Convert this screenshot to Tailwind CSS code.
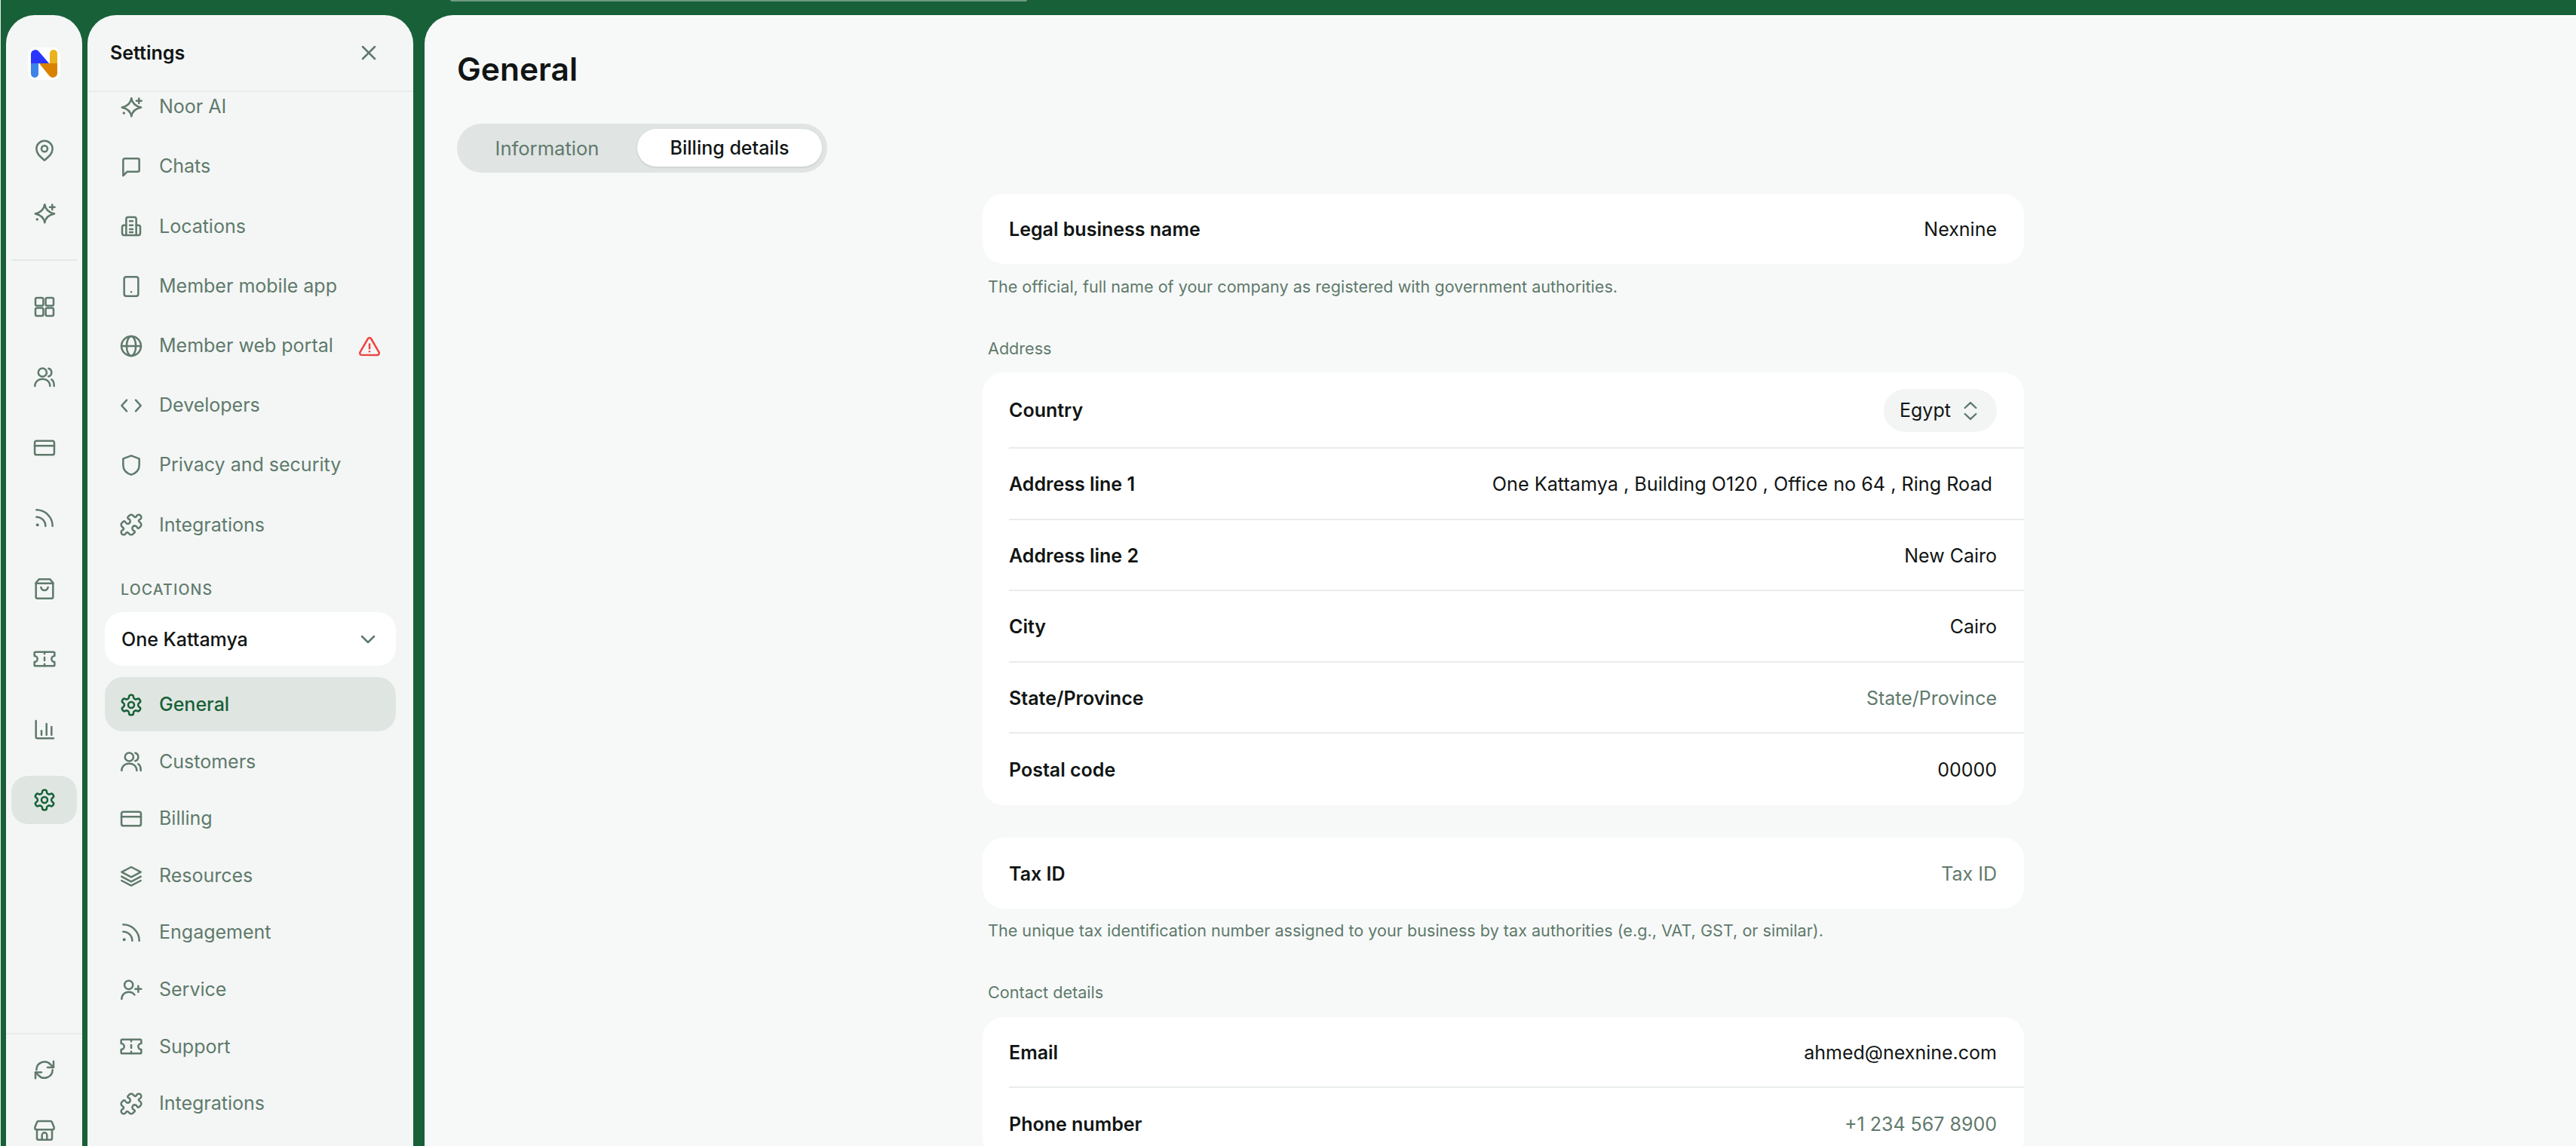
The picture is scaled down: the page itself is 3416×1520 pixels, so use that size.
<!DOCTYPE html>
<html lang="en">
<head>
  <meta charset="UTF-8" />
  <title>Settings - General</title>
  <script src="https://cdn.jsdelivr.net/npm/@tailwindcss/browser@4"></script>
</head>
<body class="h-screen overflow-hidden bg-[#176038] font-[Inter,sans-serif] text-[#111514]">

  <!-- icon set -->
  <svg class="hidden">
    <defs>
      <g id="spark"><path d="M12.2 3.2c.8 5 3.6 8 9.6 9.1-6 1.1-8.8 4-9.6 8.9-.8-4.9-3.6-7.8-9.4-8.9 5.8-1.1 8.6-4.1 9.4-9.1z"/><path d="M19.7 3.3v5M17.2 5.8h5"/><path d="M4.7 18h.01" stroke-width="2.6"/></g>
      <g id="pin"><path d="M12 21.5c-4-3.5-8-6.5-8-11.5a8 8 0 0 1 16 0c0 5-4 8-8 11.5z"/><circle cx="12" cy="10" r="3"/></g>
      <g id="grid"><rect x="3" y="3" width="7.8" height="7.8" rx="1.5"/><rect x="13.2" y="3" width="7.8" height="7.8" rx="1.5"/><rect x="3" y="13.2" width="7.8" height="7.8" rx="1.5"/><rect x="13.2" y="13.2" width="7.8" height="7.8" rx="1.5"/></g>
      <g id="users"><circle cx="10" cy="7.5" r="4.2"/><path d="M2.5 21c0-4 3-7 7.5-7s7.5 3 7.5 7"/><path d="M16 3.5c2 .5 3 2.2 3 4s-1 3.5-3 4"/><path d="M19 14.5c1.6.8 2.5 3 2.5 6.5"/></g>
      <g id="card"><rect x="2.3" y="5" width="19.4" height="14" rx="2"/><path d="M2.3 10h19.4"/></g>
      <g id="rss"><path d="M4 11a9 9 0 0 1 9 9M4 4a16 16 0 0 1 16 16"/><path d="M5 19h.01" stroke-width="3"/></g>
      <g id="bag"><path d="M6.5 2.5h11l3 3.5v14a1.5 1.5 0 0 1-1.5 1.5H5a1.5 1.5 0 0 1-1.5-1.5V6z"/><path d="M3.5 6.5h17"/><path d="M8.5 10.5c.5 2 2 3 3.5 3s3-1 3.5-3"/></g>
      <g id="ticket"><path d="M3 5h18a1 1 0 0 1 1 1v3a3 3 0 0 0 0 6v3a1 1 0 0 1-1 1H3a1 1 0 0 1-1-1v-3a3 3 0 0 0 0-6V6a1 1 0 0 1 1-1z"/><path d="M12 5v2M12 10.5v3M12 17v2"/></g>
      <g id="chart"><path d="M3.5 3v16a1.5 1.5 0 0 0 1.5 1.5h16"/><path d="M9 17v-4M14 17V6M19 17V9"/></g>
      <g id="gear"><path d="M12.22 2h-.44a2 2 0 0 0-2 2v.18a2 2 0 0 1-1 1.73l-.43.25a2 2 0 0 1-2 0l-.15-.08a2 2 0 0 0-2.73.73l-.22.38a2 2 0 0 0 .73 2.73l.15.1a2 2 0 0 1 1 1.72v.51a2 2 0 0 1-1 1.74l-.15.09a2 2 0 0 0-.73 2.73l.22.38a2 2 0 0 0 2.73.73l.15-.08a2 2 0 0 1 2 0l.43.25a2 2 0 0 1 1 1.73V20a2 2 0 0 0 2 2h.44a2 2 0 0 0 2-2v-.18a2 2 0 0 1 1-1.73l.43-.25a2 2 0 0 1 2 0l.15.08a2 2 0 0 0 2.73-.73l.22-.39a2 2 0 0 0-.73-2.73l-.15-.08a2 2 0 0 1-1-1.74v-.5a2 2 0 0 1 1-1.74l.15-.09a2 2 0 0 0 .73-2.73l-.22-.38a2 2 0 0 0-2.73-.73l-.15.08a2 2 0 0 1-2 0l-.43-.25a2 2 0 0 1-1-1.73V4a2 2 0 0 0-2-2z"/><circle cx="12" cy="12" r="3"/></g>
      <g id="refresh"><path d="M4 12a8 8 0 0 1 14-5.3L21 9.5"/><path d="M21 3.5v6h-6"/><path d="M20 12a8 8 0 0 1-14 5.3L3 14.5"/><path d="M3 20.5v-6h6"/></g>
      <g id="store"><path d="M6 3h12a1.5 1.5 0 0 1 1.4.9L21.5 9v1a1.5 1.5 0 0 1-1.5 1.5H4A1.5 1.5 0 0 1 2.5 10V9l2.1-5.1A1.5 1.5 0 0 1 6 3z"/><path d="M4.5 11.5V20a1.5 1.5 0 0 0 1.5 1.5h12a1.5 1.5 0 0 0 1.5-1.5v-8.5"/><path d="M9.5 21.5V17a2.5 2.5 0 0 1 5 0v4.5"/></g>
      <g id="chat"><path d="M4 5.5A1.5 1.5 0 0 1 5.5 4h13A1.5 1.5 0 0 1 20 5.5v10a1.5 1.5 0 0 1-1.5 1.5H8l-4 4z"/></g>
      <g id="building"><path d="M7 21V5a2 2 0 0 1 2-2h6a2 2 0 0 1 2 2v16"/><path d="M7 11H5a2 2 0 0 0-2 2v6a2 2 0 0 0 2 2h14a2 2 0 0 0 2-2v-6a2 2 0 0 0-2-2h-2"/><path d="M10.5 7h3M10.5 11h3M10.5 15h3M10.5 18h3"/></g>
      <g id="mobile"><rect x="5" y="2.5" width="14" height="19" rx="2"/><path d="M12 17.5h.01"/></g>
      <g id="globe"><circle cx="12" cy="12" r="9.7"/><path d="M2.3 12h19.4"/><ellipse cx="12" cy="12" rx="4.6" ry="9.7"/></g>
      <g id="code"><path d="M7.5 6.5 2.5 12l5 5.5"/><path d="M16.5 6.5l5 5.5-5 5.5"/></g>
      <g id="shield"><path d="M12 2.5l8 3v6.5c0 5-3.4 8-8 9.5-4.6-1.5-8-4.5-8-9.5V5.5z"/></g>
      <g id="puzzle"><path d="M19.439 7.85c-.049.322.059.648.289.878l1.568 1.568c.47.47.706 1.087.706 1.704s-.235 1.233-.706 1.704l-1.611 1.611a.98.98 0 0 1-.837.276c-.47-.07-.802-.48-.968-.925a2.501 2.501 0 1 0-3.214 3.214c.446.166.855.497.925.968a.979.979 0 0 1-.276.837l-1.61 1.61a2.404 2.404 0 0 1-1.705.707 2.402 2.402 0 0 1-1.704-.706l-1.568-1.568a1.026 1.026 0 0 0-.877-.29c-.493.074-.84.504-1.02.968a2.5 2.5 0 1 1-3.237-3.237c.464-.18.894-.527.967-1.02a1.026 1.026 0 0 0-.289-.877l-1.568-1.568A2.402 2.402 0 0 1 1.998 12c0-.617.236-1.234.706-1.704L4.23 8.77c.24-.24.581-.353.917-.303.515.077.877.528 1.073 1.01a2.5 2.5 0 1 0 3.259-3.259c-.482-.196-.933-.558-1.01-1.073-.05-.336.062-.676.303-.917l1.525-1.525A2.402 2.402 0 0 1 12 1.998c.617 0 1.234.236 1.704.706l1.568 1.568c.23.23.556.338.877.29.493-.074.84-.504 1.02-.968a2.5 2.5 0 1 1 3.237 3.237c-.464.18-.894.527-.967 1.02Z"/></g>
      <g id="layers"><path d="M12 3l9.5 5-9.5 5-9.5-5z"/><path d="M2.5 12.5l9.5 5 9.5-5"/><path d="M2.5 16.5l9.5 5 9.5-5"/></g>
      <g id="userplus"><circle cx="9.5" cy="7" r="4.2"/><path d="M2.5 21c0-4 3-7 7-7 2.6 0 4.6 1 5.8 2.8"/><path d="M19 8v6M16 11h6"/></g>
      <g id="warn"><path d="M10.3 4.2 2 18.5a2 2 0 0 0 1.7 3h16.6a2 2 0 0 0 1.7-3L13.7 4.2a2 2 0 0 0-3.4 0z"/><path d="M12 10v4.5"/><path d="M12 17.8h.01"/></g>
      <g id="close"><path d="M6 6l12 12M18 6 6 18"/></g>
      <g id="down"><path d="M6 9l6 6 6-6"/></g>
      <g id="updown"><path d="M6.5 9 12 3.8 17.5 9"/><path d="M6.5 15l5.5 5.2 5.5-5.2"/></g>
    </defs>
  </svg>

  <!-- strip along the top of the window -->
  <div class="absolute left-[597px] top-0 h-[2px] w-[765px] rounded-b-sm bg-[#6f9a82]"></div>

  <div class="flex h-full">
    <div class="w-px shrink-0 bg-[#e6ebe8]"></div>

    <!-- icon rail -->
    <aside class="ml-[7px] mt-[20px] flex w-[101px] shrink-0 flex-col rounded-t-[38px] bg-[#f4f6f5] text-[#5f7a6c]">
      <div class="mt-[43px] flex justify-center">
        <div class="h-[43px] w-[43px] rounded-[10px] bg-white">
          <svg viewBox="0 0 43 43" class="h-full w-full">
            <path fill="#2936ff" d="M4 21V9a6 6 0 0 1 10.5-3.8L28 21z"/>
            <path fill="#3d84e8" d="M4 21h10v14a5 5 0 0 1-10 0z"/>
            <path fill="#eab21e" d="M29 8a5 5 0 0 1 10 0v13H29z"/>
            <path fill="#d98200" d="M15 21h24v13a6 6 0 0 1-10.5 3.8z"/>
          </svg>
        </div>
      </div>
      <div class="mt-[52px] flex h-[83px] items-center justify-center"><svg viewBox="0 0 24 24" class="h-8 w-8" fill="none" stroke="currentColor" stroke-width="1.9" stroke-linecap="round" stroke-linejoin="round"><use href="#pin"/></svg></div>
      <div class="flex h-[83px] items-center justify-center"><svg viewBox="0 0 24 24" class="h-8 w-8" fill="none" stroke="currentColor" stroke-width="1.9" stroke-linecap="round" stroke-linejoin="round"><use href="#spark"/></svg></div>
      <div class="mx-[7px] mt-[20px] h-[2px] bg-[#e3e9e6]"></div>
      <div class="mt-[14px] flex h-[93.5px] items-center justify-center"><svg viewBox="0 0 24 24" class="h-8 w-8" fill="none" stroke="currentColor" stroke-width="1.9" stroke-linecap="round" stroke-linejoin="round"><use href="#grid"/></svg></div>
      <div class="flex h-[93.5px] items-center justify-center"><svg viewBox="0 0 24 24" class="h-8 w-8" fill="none" stroke="currentColor" stroke-width="1.9" stroke-linecap="round" stroke-linejoin="round"><use href="#users"/></svg></div>
      <div class="flex h-[93.5px] items-center justify-center"><svg viewBox="0 0 24 24" class="h-8 w-8" fill="none" stroke="currentColor" stroke-width="1.9" stroke-linecap="round" stroke-linejoin="round"><use href="#card"/></svg></div>
      <div class="flex h-[93.5px] items-center justify-center"><svg viewBox="0 0 24 24" class="h-8 w-8" fill="none" stroke="currentColor" stroke-width="1.9" stroke-linecap="round" stroke-linejoin="round"><use href="#rss"/></svg></div>
      <div class="flex h-[93.5px] items-center justify-center"><svg viewBox="0 0 24 24" class="h-8 w-8" fill="none" stroke="currentColor" stroke-width="1.9" stroke-linecap="round" stroke-linejoin="round"><use href="#bag"/></svg></div>
      <div class="flex h-[93.5px] items-center justify-center"><svg viewBox="0 0 24 24" class="h-8 w-8" fill="none" stroke="currentColor" stroke-width="1.9" stroke-linecap="round" stroke-linejoin="round"><use href="#ticket"/></svg></div>
      <div class="flex h-[93.5px] items-center justify-center"><svg viewBox="0 0 24 24" class="h-8 w-8" fill="none" stroke="currentColor" stroke-width="1.9" stroke-linecap="round" stroke-linejoin="round"><use href="#chart"/></svg></div>
      <div class="flex h-[93.5px] items-center justify-center">
        <div class="mx-[7px] flex h-[64px] w-[87px] items-center justify-center rounded-[22px] bg-[#dfe6e2] text-[#176038]"><svg viewBox="0 0 24 24" class="h-8 w-8" fill="none" stroke="currentColor" stroke-width="1.9" stroke-linecap="round" stroke-linejoin="round"><use href="#gear"/></svg></div>
      </div>
      <div class="mt-auto h-[150px] overflow-hidden border-t-2 border-[#e8ecea] pt-[7px]">
        <div class="flex h-[80px] items-center justify-center"><svg viewBox="0 0 24 24" class="h-8 w-8" fill="none" stroke="currentColor" stroke-width="1.9" stroke-linecap="round" stroke-linejoin="round"><use href="#refresh"/></svg></div>
        <div class="flex h-[80px] items-center justify-center"><svg viewBox="0 0 24 24" class="h-8 w-8" fill="none" stroke="currentColor" stroke-width="1.9" stroke-linecap="round" stroke-linejoin="round"><use href="#store"/></svg></div>
      </div>
    </aside>

    <!-- settings navigation -->
    <nav class="ml-[7px] mt-[20px] flex w-[432px] shrink-0 flex-col overflow-hidden rounded-t-[38px] bg-[#f4f6f5] text-[25px] text-[#5f7a6c]">
      <div class="flex h-[102px] shrink-0 items-center justify-between border-b-2 border-[#e8ecea] pl-[30px] pr-[43px]">
        <span class="pt-[2px] font-semibold text-[#111514]">Settings</span>
        <svg viewBox="0 0 24 24" class="h-8 w-8" fill="none" stroke="currentColor" stroke-width="1.9" stroke-linecap="round" stroke-linejoin="round"><use href="#close"/></svg>
      </div>
      <div class="min-h-0 flex-1 overflow-hidden">
        <div class="-mt-[21px]">
          <a class="mx-[23px] flex h-[79.4px] items-center gap-[21px] px-[19px] pt-[2px]"><svg viewBox="0 0 24 24" class="h-8 w-8 shrink-0" fill="none" stroke="currentColor" stroke-width="1.9" stroke-linecap="round" stroke-linejoin="round"><use href="#spark"/></svg>Noor AI</a>
          <a class="mx-[23px] flex h-[79.4px] items-center gap-[21px] px-[19px] pt-[2px]"><svg viewBox="0 0 24 24" class="h-8 w-8 shrink-0" fill="none" stroke="currentColor" stroke-width="1.9" stroke-linecap="round" stroke-linejoin="round"><use href="#chat"/></svg>Chats</a>
          <a class="mx-[23px] flex h-[79.4px] items-center gap-[21px] px-[19px] pt-[2px]"><svg viewBox="0 0 24 24" class="h-8 w-8 shrink-0" fill="none" stroke="currentColor" stroke-width="1.9" stroke-linecap="round" stroke-linejoin="round"><use href="#building"/></svg>Locations</a>
          <a class="mx-[23px] flex h-[79.4px] items-center gap-[21px] px-[19px] pt-[2px]"><svg viewBox="0 0 24 24" class="h-8 w-8 shrink-0" fill="none" stroke="currentColor" stroke-width="1.9" stroke-linecap="round" stroke-linejoin="round"><use href="#mobile"/></svg>Member mobile app</a>
          <a class="mx-[23px] flex h-[79.4px] items-center gap-[21px] pl-[19px] pr-[20px] pt-[1px]"><svg viewBox="0 0 24 24" class="h-8 w-8 shrink-0" fill="none" stroke="currentColor" stroke-width="1.9" stroke-linecap="round" stroke-linejoin="round"><use href="#globe"/></svg>Member web portal<svg viewBox="0 0 24 24" class="ml-auto h-[30px] w-[30px] shrink-0 text-[#ef4444]" fill="none" stroke="currentColor" stroke-width="2" stroke-linecap="round" stroke-linejoin="round"><use href="#warn"/></svg></a>
          <a class="mx-[23px] flex h-[79.4px] items-center gap-[21px] px-[19px]"><svg viewBox="0 0 24 24" class="h-8 w-8 shrink-0" fill="none" stroke="currentColor" stroke-width="1.9" stroke-linecap="round" stroke-linejoin="round"><use href="#code"/></svg>Developers</a>
          <a class="mx-[23px] flex h-[79.4px] items-center gap-[21px] px-[19px]"><svg viewBox="0 0 24 24" class="h-8 w-8 shrink-0" fill="none" stroke="currentColor" stroke-width="1.9" stroke-linecap="round" stroke-linejoin="round"><use href="#shield"/></svg>Privacy and security</a>
          <a class="mx-[23px] flex h-[79.4px] items-center gap-[21px] px-[19px]"><svg viewBox="0 0 24 24" class="h-8 w-8 shrink-0" fill="none" stroke="currentColor" stroke-width="1.9" stroke-linecap="round" stroke-linejoin="round"><use href="#puzzle"/></svg>Integrations</a>

          <div class="mt-[31px] flex h-[30px] items-center pl-[44px] text-[19.5px] font-medium tracking-[0.06em]">LOCATIONS</div>
          <div class="mx-[23px] mt-[15px] flex h-[71px] items-center justify-between rounded-[24px] bg-white pl-[22px] pr-[21px] font-medium text-[#111514]">
            <span class="pt-[2px]">One Kattamya</span>
            <svg viewBox="0 0 24 24" class="h-8 w-8 text-[#5f7a6c]" fill="none" stroke="currentColor" stroke-width="1.9" stroke-linecap="round" stroke-linejoin="round"><use href="#down"/></svg>
          </div>
          <a class="mx-[23px] mt-[15px] flex h-[72px] items-center gap-[21px] rounded-[24px] bg-[#dfe5e1] px-[19px] pt-[2px] font-medium text-[#176038]"><svg viewBox="0 0 24 24" class="h-8 w-8 shrink-0" fill="none" stroke="currentColor" stroke-width="1.9" stroke-linecap="round" stroke-linejoin="round"><use href="#gear"/></svg>General</a>
          <div class="mt-[2px]">
            <a class="mx-[23px] flex h-[75.6px] items-center gap-[21px] px-[19px] pt-[1px]"><svg viewBox="0 0 24 24" class="h-8 w-8 shrink-0" fill="none" stroke="currentColor" stroke-width="1.9" stroke-linecap="round" stroke-linejoin="round"><use href="#users"/></svg>Customers</a>
            <a class="mx-[23px] flex h-[75.6px] items-center gap-[21px] px-[19px] pt-[1px]"><svg viewBox="0 0 24 24" class="h-8 w-8 shrink-0" fill="none" stroke="currentColor" stroke-width="1.9" stroke-linecap="round" stroke-linejoin="round"><use href="#card"/></svg>Billing</a>
            <a class="mx-[23px] flex h-[75.6px] items-center gap-[21px] px-[19px] pt-[1px]"><svg viewBox="0 0 24 24" class="h-8 w-8 shrink-0" fill="none" stroke="currentColor" stroke-width="1.9" stroke-linecap="round" stroke-linejoin="round"><use href="#layers"/></svg>Resources</a>
            <a class="mx-[23px] flex h-[75.6px] items-center gap-[21px] px-[19px] pt-[1px]"><svg viewBox="0 0 24 24" class="h-8 w-8 shrink-0" fill="none" stroke="currentColor" stroke-width="1.9" stroke-linecap="round" stroke-linejoin="round"><use href="#rss"/></svg>Engagement</a>
            <a class="mx-[23px] flex h-[75.6px] items-center gap-[21px] px-[19px] pt-[1px]"><svg viewBox="0 0 24 24" class="h-8 w-8 shrink-0" fill="none" stroke="currentColor" stroke-width="1.9" stroke-linecap="round" stroke-linejoin="round"><use href="#userplus"/></svg>Service</a>
            <a class="mx-[23px] flex h-[75.6px] items-center gap-[21px] px-[19px] pt-[1px]"><svg viewBox="0 0 24 24" class="h-8 w-8 shrink-0" fill="none" stroke="currentColor" stroke-width="1.9" stroke-linecap="round" stroke-linejoin="round"><use href="#ticket"/></svg>Support</a>
            <a class="mx-[23px] flex h-[75.6px] items-center gap-[21px] px-[19px] pt-[1px]"><svg viewBox="0 0 24 24" class="h-8 w-8 shrink-0" fill="none" stroke="currentColor" stroke-width="1.9" stroke-linecap="round" stroke-linejoin="round"><use href="#puzzle"/></svg>Integrations</a>
          </div>
        </div>
      </div>
    </nav>

    <!-- main content -->
    <main class="ml-[15px] mt-[20px] min-w-0 flex-1 overflow-hidden rounded-tl-[38px] bg-[#f7f9f8] pl-[43px] pt-[44px]">
      <h1 class="h-[56px] text-[42.5px] font-semibold leading-[56px]">General</h1>

      <div class="mt-[44px] flex h-[65px] w-[491px] items-start rounded-full bg-[#e0e4e3] pt-[7px]">
        <span class="flex h-[50px] w-[239px] items-center justify-center pt-[2px] text-[25.6px] text-[#5f7a6c]">Information</span>
        <span class="flex h-[50px] w-[245px] items-center justify-center rounded-full bg-white pt-[2px] text-[25px] font-medium shadow-sm">Billing details</span>
      </div>

      <div class="ml-[697px] mt-[28px] w-[1381px] text-[25px]">
        <div class="flex h-[93px] items-center justify-between rounded-[28px] bg-white pl-[35px] pr-[36px] pt-[3px]">
          <span class="font-semibold">Legal business name</span><span>Nexnine</span>
        </div>
        <p class="ml-[7px] mt-[15px] h-[30px] text-[21.6px] leading-[30px] text-[#5f7a6c]">The official, full name of your company as registered with government authorities.</p>

        <h2 class="ml-[7px] mt-[52px] h-[30px] text-[21.6px] leading-[30px] text-[#5f7a6c]">Address</h2>
        <div class="mt-[17px] rounded-[28px] bg-white pl-[35px]">
          <div class="flex h-[101px] items-center justify-between border-b-2 border-[#e8ecea] pr-[36px] pt-[2px]">
            <span class="font-semibold">Country</span>
            <span class="flex h-[57px] w-[150px] items-center justify-between rounded-full bg-[#f3f5f4] pl-[21px] pr-[19px]">Egypt<svg viewBox="0 0 24 24" class="h-8 w-8 text-[#5f7a6c]" fill="none" stroke="currentColor" stroke-width="1.8" stroke-linecap="round" stroke-linejoin="round"><use href="#updown"/></svg></span>
          </div>
          <div class="flex h-[95px] items-center justify-between border-b-2 border-[#e8ecea] pr-[42px] pt-[3px]">
            <span class="font-semibold">Address line 1</span><span class="text-[25.2px]">One Kattamya , Building O120 , Office no 64 , Ring Road</span>
          </div>
          <div class="flex h-[94px] items-center justify-between border-b-2 border-[#e8ecea] pr-[36px] pt-[3px]">
            <span class="font-semibold">Address line 2</span><span>New Cairo</span>
          </div>
          <div class="flex h-[95px] items-center justify-between border-b-2 border-[#e8ecea] pr-[36px] pt-[3px]">
            <span class="font-semibold">City</span><span>Cairo</span>
          </div>
          <div class="flex h-[94px] items-center justify-between border-b-2 border-[#e8ecea] pr-[36px] pt-[3px]">
            <span class="font-semibold">State/Province</span><span class="text-[#5f7a6c]">State/Province</span>
          </div>
          <div class="flex h-[95px] items-center justify-between pr-[36px] pt-[3px]">
            <span class="font-semibold">Postal code</span><span>00000</span>
          </div>
        </div>

        <div class="mt-[43px] flex h-[94px] items-center justify-between rounded-[28px] bg-white pl-[35px] pr-[36px] pt-[3px]">
          <span class="font-semibold">Tax ID</span><span class="text-[#5f7a6c]">Tax ID</span>
        </div>
        <p class="ml-[7px] mt-[14px] h-[30px] text-[21.6px] leading-[30px] text-[#5f7a6c]">The unique tax identification number assigned to your business by tax authorities (e.g., VAT, GST, or similar).</p>

        <h2 class="ml-[7px] mt-[52px] h-[30px] text-[21.6px] leading-[30px] text-[#5f7a6c]">Contact details</h2>
        <div class="mt-[18px] rounded-[28px] bg-white pl-[35px]">
          <div class="flex h-[94px] items-center justify-between border-b-2 border-[#e8ecea] pr-[36px] pt-[3px]">
            <span class="font-semibold">Email</span><span>ahmed@nexnine.com</span>
          </div>
          <div class="flex h-[95px] items-center justify-between pr-[36px] pt-[3px]">
            <span class="font-semibold">Phone number</span><span class="text-[#5f7a6c]">+1 234 567 8900</span>
          </div>
        </div>
      </div>
    </main>
  </div>
</body>
</html>
